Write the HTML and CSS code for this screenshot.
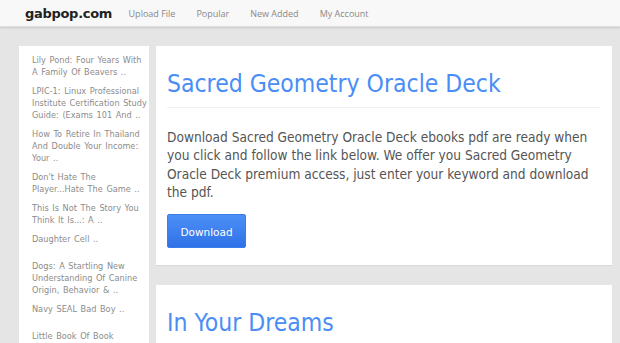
FILE: index.html
```html
<!DOCTYPE html>
<html>
<head>
<meta charset="utf-8">
<link rel="stylesheet" href="styles.css">
</head>
<body>
<header class="navbar">
  <a class="brand" href="#">gabpop.com</a>
  <nav class="nav">
    <a href="#">Upload File</a>
    <a href="#">Popular</a>
    <a href="#">New Added</a>
    <a href="#">My Account</a>
  </nav>
</header>
<div class="layout">
  <aside class="sidebar">
    <a class="side-item" href="#">Lily Pond: Four Years With A Family Of Beavers ..</a>
    <a class="side-item" href="#">LPIC-1: Linux Professional Institute Certification Study Guide: (Exams 101 And ..</a>
    <a class="side-item" href="#">How To Retire In Thailand And Double Your Income: Your ..</a>
    <a class="side-item" href="#">Don't Hate The Player...Hate The Game ..</a>
    <a class="side-item" href="#">This Is Not The Story You Think It Is...: A ..</a>
    <a class="side-item extra" href="#">Daughter Cell ..</a>
    <a class="side-item" href="#">Dogs: A Startling New Understanding Of Canine Origin, Behavior &amp; ..</a>
    <a class="side-item extra" href="#">Navy SEAL Bad Boy ..</a>
    <a class="side-item" href="#">Little Book Of Book</a>
  </aside>
  <main class="content">
    <section class="card">
      <h1 class="title">Sacred Geometry Oracle Deck</h1>
      <hr class="rule">
      <p class="desc">Download Sacred Geometry Oracle Deck ebooks pdf are ready when you click and follow the link below. We offer you Sacred Geometry Oracle Deck premium access, just enter your keyword and download the pdf.</p>
      <a class="btn" href="#">Download</a>
    </section>
    <section class="card">
      <h1 class="title">In Your Dreams</h1>
    </section>
  </main>
</div>
</body>
</html>
```
FILE: styles.css
```css
html, body {
  margin: 0;
  padding: 0;
}
body {
  background: #e5e5e5;
  font-family: "DejaVu Sans", Verdana, sans-serif;
  overflow: hidden;
  height: 343px;
}
a { text-decoration: none; }

.navbar {
  height: 27px;
  background: #f8f8f8;
  box-shadow: 0 1px 2px rgba(0,0,0,0.12);
  border-bottom: 1px solid #e0e0e0;
  box-sizing: border-box;
  display: flex;
  align-items: center;
  padding-left: 25px;
}
.brand {
  font-family: "DejaVu Sans", Verdana, sans-serif;
  font-weight: bold;
  font-size: 13px;
  color: #222;
  margin-right: 6px;
  letter-spacing: -0.3px;
}
.nav {
  display: flex;
}
.nav a {
  font-family: "Open Sans", sans-serif;
  font-size: 9px;
  color: #888;
  padding: 0 10.5px;
}

.layout {
  display: flex;
  align-items: flex-start;
  gap: 7px;
  padding: 19px 8px 0 19px;
}
.sidebar {
  width: 130px;
  flex: none;
  background: #fff;
  box-sizing: border-box;
  padding: 8px 0 40px 13px;
  display: flex;
  flex-direction: column;
  gap: 7px;
}
.side-item {
  font-family: "DejaVu Sans", sans-serif;
  font-size: 8.2px;
  word-spacing: 1px;
  line-height: 12px;
  color: #8c8c8c;
}
.side-item.extra {
  margin-bottom: 8px;
}

.content {
  flex: 1;
  display: flex;
  flex-direction: column;
  gap: 20px;
}
.card {
  background: #fff;
  padding: 23px 12px 17px 11px;
  box-shadow: 0 1px 1px rgba(0,0,0,0.05);
}
.title {
  margin: 0;
  font-family: "DejaVu Sans Condensed", "DejaVu Sans", sans-serif;
  font-stretch: semi-condensed;
  font-weight: normal;
  font-size: 24.5px;
  line-height: 30px;
  color: #4a8ef5;
}
.rule {
  border: 0;
  border-top: 1px solid #f0f0f0;
  margin: 8px 0 20px 0;
}
.desc {
  margin: 0 0 13px 0;
  font-family: "DejaVu Sans Condensed", "DejaVu Sans", sans-serif;
  font-stretch: semi-condensed;
  font-size: 13.6px;
  line-height: 18.3px;
  color: #555;
}
.btn {
  display: inline-block;
  width: 79px;
  height: 34px;
  line-height: 34px;
  box-sizing: border-box;
  text-align: center;
  color: #fff;
  font-family: "DejaVu Sans", sans-serif;
  font-size: 10.5px;
  background: linear-gradient(#4d8ff6, #2f72e8);
  border: 1px solid #3b7bea;
  border-radius: 2px;
}
```
